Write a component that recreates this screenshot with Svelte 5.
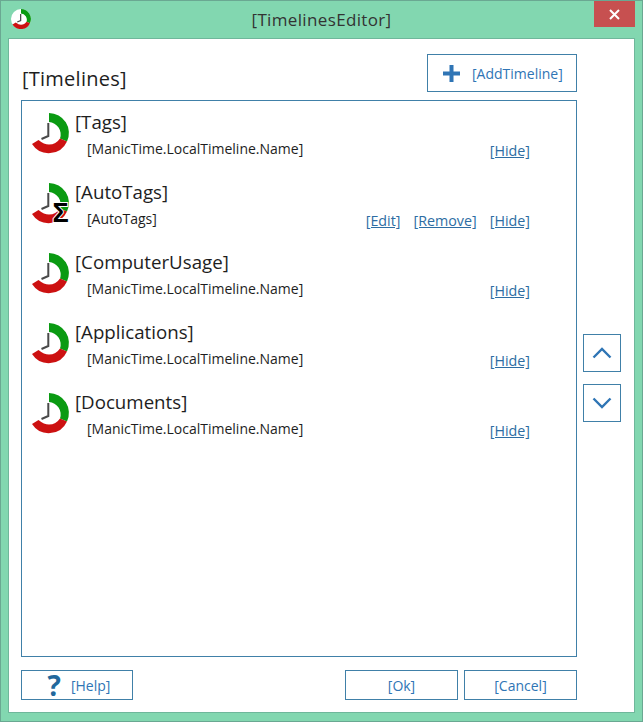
<script>
    const timelines = [
        { title: '[Tags]', name: '[ManicTime.LocalTimeline.Name]' },
        { title: '[AutoTags]', name: '[AutoTags]', auto: true },
        { title: '[ComputerUsage]', name: '[ManicTime.LocalTimeline.Name]' },
        { title: '[Applications]', name: '[ManicTime.LocalTimeline.Name]' },
        { title: '[Documents]', name: '[ManicTime.LocalTimeline.Name]' }
    ]
</script>

{#snippet clockShapes(handWidth)}
    <path d="M20 0A20 20 0 0 1 38 28.5L31 25.5A12.5 12.5 0 0 0 20 9Z" fill="#0a9a12" />
    <path d="M38 28.5A20 20 0 0 1 3 31L9.5 27Q15 31.5 20 31.5Q27 31.5 31 25.5Z" fill="#cc1111" />
    <path d="M19.3 10V23L12.5 26" fill="none" stroke="#4a4a4a" stroke-width={handWidth} />
{/snippet}

<div class="window">
    <div class="titlebar">
        <div class="appIcon">
            <svg viewBox="0 0 40 40" width="20" height="20">
                <circle cx="20" cy="20" r="20" fill="#ffffff" />
                {@render clockShapes(2.5)}
            </svg>
        </div>
        <div class="windowTitle">[TimelinesEditor]</div>
        <div class="closeWrapper">
            <button class="close" aria-label="close">
                <svg viewBox="0 0 11 11" width="11" height="11">
                    <path d="M1 1L10 10M10 1L1 10" stroke="#ffffff" stroke-width="2" fill="none" />
                </svg>
            </button>
        </div>
    </div>

    <div class="client">
        <div class="mainColumn">
            <div class="header">
                <div class="heading">[Timelines]</div>
                <button class="bn addBn">
                    <svg viewBox="0 0 17 17" width="17" height="17">
                        <path d="M8.5 0V17M0 8.5H17" stroke="#2f75b5" stroke-width="4" fill="none" />
                    </svg>
                    <span>[AddTimeline]</span>
                </button>
            </div>

            <div class="list">
                {#each timelines as item}
                    <div class="row">
                        <svg class="clock" viewBox="0 0 40 40" width="40" height="40">
                            {@render clockShapes(2)}
                            {#if item.auto}
                                <text class="sigma" x="31.5" y="38.5" text-anchor="middle">Σ</text>
                            {/if}
                        </svg>
                        <div class="rowBody">
                            <div class="rowTitle">{item.title}</div>
                            <div class="rowLine">
                                <span class="rowName">{item.name}</span>
                                <span class="links">
                                    {#if item.auto}
                                        <a href="#edit">[Edit]</a>
                                        <a href="#remove">[Remove]</a>
                                    {/if}
                                    <a href="#hide">[Hide]</a>
                                </span>
                            </div>
                        </div>
                    </div>
                {/each}
            </div>

            <div class="footer">
                <button class="bn helpBn">
                    <span class="question">?</span>
                    <span>[Help]</span>
                </button>
                <div class="footerRight">
                    <button class="bn okBn">[Ok]</button>
                    <button class="bn cancelBn">[Cancel]</button>
                </div>
            </div>
        </div>

        <div class="sideColumn">
            <button class="bn moveBn" aria-label="up">
                <svg viewBox="0 0 20 12" width="20" height="12">
                    <path d="M1.5 10.5L10 2L18.5 10.5" stroke="#2f75b5" stroke-width="2.4" fill="none" />
                </svg>
            </button>
            <button class="bn moveBn" aria-label="down">
                <svg viewBox="0 0 20 12" width="20" height="12">
                    <path d="M1.5 1.5L10 10L18.5 1.5" stroke="#2f75b5" stroke-width="2.4" fill="none" />
                </svg>
            </button>
        </div>
    </div>
</div>

<style>
    :global(body){
        margin: 0;
        background: #82d7b0;
    }
    .window{
        box-sizing: border-box;
        display: flex;
        flex-direction: column;
        width: 643px;
        height: 722px;
        background: #82d7b0;
        border: 1px solid #6aa892;
        font-family: "Open Sans", "Liberation Sans", sans-serif;
        color: #1e1e1e;
    }
    .titlebar{
        display: grid;
        grid-template-columns: 1fr auto 1fr;
        height: 37px;
        flex: none;
    }
    .appIcon{
        padding: 8px 0 0 10px;
    }
    .windowTitle{
        padding-top: 8px;
        font-size: 17px;
        line-height: 22px;
        letter-spacing: 0.35px;
        color: #333333;
    }
    .closeWrapper{
        display: flex;
        justify-content: flex-end;
        padding-right: 7px;
    }
    .close{
        display: flex;
        align-items: center;
        justify-content: center;
        padding: 0;
        width: 41px;
        height: 26px;
        border: none;
        background: #c75050;
    }
    .client{
        box-sizing: border-box;
        display: flex;
        flex: 1;
        gap: 6px;
        margin: 0 7px 8px 7px;
        padding: 15px 0 0 12px;
        background: #ffffff;
        border: 1px solid #6fb79b;
    }
    .mainColumn{
        display: flex;
        flex-direction: column;
        width: 556px;
    }
    .header{
        display: flex;
        justify-content: space-between;
        align-items: flex-end;
        height: 38px;
    }
    .heading{
        padding-left: 1px;
        font-size: 20px;
        line-height: 27px;
        letter-spacing: 0.25px;
    }
    .bn{
        box-sizing: border-box;
        margin: 0;
        padding: 0;
        background: #ffffff;
        border: 1px solid #4080a8;
        color: #2f75b5;
        font-family: inherit;
        font-size: 14px;
    }
    .addBn{
        display: flex;
        align-items: center;
        gap: 12px;
        padding-left: 15px;
        width: 150px;
        height: 38px;
    }
    .list{
        box-sizing: border-box;
        flex: none;
        height: 557px;
        margin-top: 8px;
        padding-top: 10px;
        border: 1px solid #4080a8;
    }
    .row{
        display: flex;
        height: 70px;
    }
    .clock{
        flex: none;
        margin: 2px 0 0 7px;
        overflow: visible;
    }
    .rowBody{
        flex: 1;
        padding-left: 6px;
    }
    .rowTitle{
        font-size: 18.7px;
        line-height: 22px;
    }
    .rowLine{
        display: flex;
        justify-content: space-between;
        padding: 6px 46px 0 12px;
        font-size: 14px;
        line-height: 20px;
    }
    .links{
        display: flex;
        gap: 13px;
        padding-top: 2px;
        font-size: 14.3px;
    }
    .links a{
        color: #2d6da3;
    }
    .sigma{
        font-family: "Liberation Sans", sans-serif;
        font-size: 27px;
        font-weight: bold;
        fill: #000000;
        stroke: #ffffff;
        stroke-width: 2px;
        paint-order: stroke;
    }
    .footer{
        display: flex;
        justify-content: space-between;
        margin-top: 13px;
    }
    .footerRight{
        display: flex;
        gap: 6px;
    }
    .helpBn{
        display: flex;
        align-items: center;
        justify-content: center;
        gap: 10px;
        padding-left: 4px;
        width: 112px;
        height: 30px;
    }
    .question{
        font-size: 28px;
        font-weight: bold;
        line-height: 28px;
        color: #22689c;
    }
    .okBn{
        width: 113px;
        height: 30px;
    }
    .cancelBn{
        width: 113px;
        height: 30px;
    }
    .sideColumn{
        display: flex;
        flex-direction: column;
        gap: 12px;
        padding-top: 280px;
    }
    .moveBn{
        display: flex;
        align-items: center;
        justify-content: center;
        width: 38px;
        height: 38px;
    }
</style>
